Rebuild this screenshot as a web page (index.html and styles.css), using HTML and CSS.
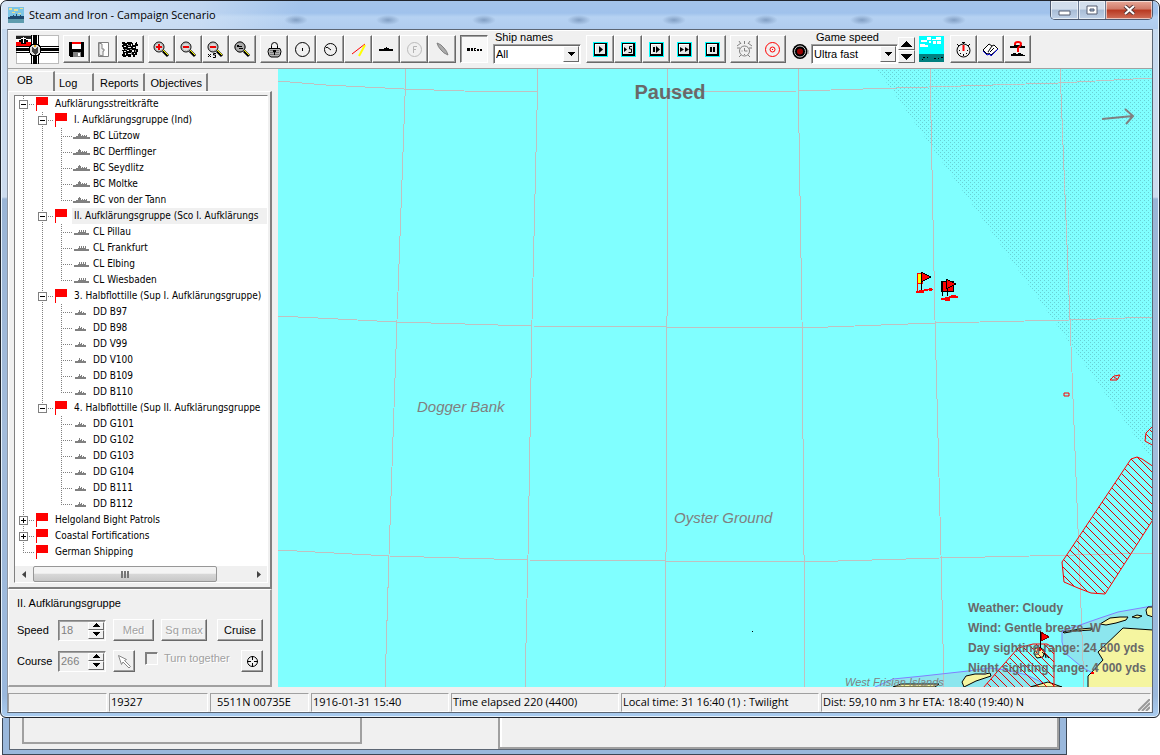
FILE: index.html
```html
<!DOCTYPE html>
<html lang="en">
<head>
    <meta charset="UTF-8">
    <meta name="viewport" content="width=device-width, initial-scale=1.0">
    <title>Steam and Iron - Campaign Scenario</title>
    <link rel="stylesheet" href="styles.css">
</head>
<body>
    <!-- shared icons -->
    <svg class="symbols" aria-hidden="true">
        <symbol id="flag" viewBox="0 0 19 16"><path fill="#f00" d="M2 1h12v8H3v6H2z"/></symbol>
        <symbol id="bc" viewBox="0 0 19 16"><path fill="#808080" d="M1 11V9h3V8h2V6h1V5h1v1h1v2h1V7h1v1h1V7h1v1h1V7h1v2h3v2z"/></symbol>
        <symbol id="cl" viewBox="0 0 19 16"><path fill="#808080" d="M2 11V9h4V8h1V6h1v2h1V6h1v2h1V6h1v2h1V6h1v3h3v2z"/></symbol>
        <symbol id="dd" viewBox="0 0 19 16"><path fill="#808080" d="M3 11V9h3V8h1V6h1v2h1V7h1v2h1V8h1v1h2v2z"/></symbol>
        <symbol id="lens" viewBox="0 0 17 17">
            <path d="M10 10l5 5" stroke="#000" stroke-width="3"/><path d="M10 9l5 5" stroke="#ff0" stroke-width="1"/>
            <circle cx="6" cy="6" r="5" fill="#d8d8d8" stroke="#000" stroke-width="1"/>
            <circle cx="6" cy="6" r="4" fill="none" stroke="#888" stroke-dasharray="1 1"/>
        </symbol>
        <symbol id="play-frame" viewBox="0 0 15 15">
            <path fill="#0ff" d="M0 0h15v15H0z"/><path d="M1 1h13v13H1z" fill="#000"/><path d="M2 2h10v10H2z" fill="#fff"/><path d="M3 3h9v9H3z" fill="#e8e8e8"/>
        </symbol>
        <symbol id="up" viewBox="0 0 9 5"><path d="M4 0h1v1h1v1h1v1h1v1H1V3h1V2h1V1h1z"/></symbol>
        <symbol id="down" viewBox="0 0 9 5"><path d="M1 0h7v1H7v1H6v1H5v1H4V3H3V2H2V1H1z"/></symbol>
        <symbol id="big-up" viewBox="0 0 11 6"><path d="M5 0h1v1h1v1h1v1h1v1h1v1h1v1H0V5h1V4h1V3h1V2h1V1h1z"/></symbol>
        <symbol id="big-down" viewBox="0 0 11 6"><path d="M0 0h11v1h-1v1H9v1H8v1H7v1H6v1H5V5H4V4H3V3H2V2H1V1H0z"/></symbol>
    </svg>

    <div class="window">
        <header class="titlebar">
            <svg class="app-icon" width="16" height="16" viewBox="0 0 16 16"><path fill="#7cc4e4" d="M0 0h16v11H0z"/><path fill="#e8e090" d="M1 1h3v2H1zM6 2h4v2H6zM12 1h3v1h-3zM4 5h3v1H4zM10 6h3v1h-3z"/><path fill="#1d4a70" d="M0 10h2V9h3V8h1v1h2V7h1v2h3V8h1v1h3v3H0z"/><path fill="#5e9cae" d="M0 12h16v4H0z"/></svg>
            <h1>Steam and Iron - Campaign Scenario</h1>
            <div class="caption">
                <button class="min" aria-label="Minimize"><svg width="13" height="6" viewBox="0 0 13 6"><path d="M1 1h11v4H1z" fill="#fff" stroke="#555c70"/></svg></button>
                <button class="max" aria-label="Maximize"><svg width="12" height="10" viewBox="0 0 12 10"><path d="M1 1h10v8H1z" fill="#fff" stroke="#555c70"/><path d="M4 4h4v2H4z" fill="#9db4d0" stroke="#555c70"/></svg></button>
                <button class="close" aria-label="Close"><svg width="13" height="10" viewBox="0 0 13 10"><path d="M2 1l9 8M11 1L2 9" stroke="#5a3a3a" stroke-width="4"/><path d="M2 1l9 8M11 1L2 9" stroke="#fff" stroke-width="2"/></svg></button>
            </div>
        </header>

        <div class="client">
            <div class="toolbar">
                <svg class="ensign" width="43" height="29" viewBox="0 0 43 29" shape-rendering="crispEdges">
                    <path fill="#fff" stroke="#bbb" d="M0.500 0.500h42v28h-42z"/>
                    <path fill="#fff" d="M0 1h15v6H0z"/><path d="M0 1h15v3H0z" fill="#222"/><path fill="#f00" d="M0 7h15v4H0z"/>
                    <path d="M5 4h5v5H5zM3 5h9v2H3z"/><path fill="#fff" d="M7 2h1v6H7zM5 3h5v1H5z"/>
                    <path d="M0 11h43v1H0zM0 13h43v3H0zM0 17h43v1H0z"/><path d="M15 0h1v29h-1zM17 0h4v29h-4zM22 0h1v29h-1z"/>
                    <circle cx="19" cy="15" r="6" fill="#ddd" stroke="#000"/><path d="M16 12l3 2 3-2v5l-3 3-3-3z" fill="#444"/><path fill="#da2" d="M18 10h2v2h-2z"/>
                </svg>
                <div class="group narrow">
                    <button aria-label="Save"><svg width="17" height="17" viewBox="0 0 17 17" shape-rendering="crispEdges"><path d="M1 1h15v15H2l-1-1z"/><path fill="#fff" d="M4 1h9v7H4z"/><path fill="#f00" d="M4 1h9v2H4z"/><path fill="#808080" d="M5 11h8v5H5z"/><path d="M10 12h2v3h-2z" fill="#fff"/></svg></button>
                    <button aria-label="Exit"><svg width="17" height="17" viewBox="0 0 17 17" fill="#fff" stroke="#808080"><path d="M3.500 1.500h10v14h-10z"/><path d="M4 2l3 1v5h2v2H8v5l-4-1z" fill="#efefef"/></svg></button>
                    <button aria-label="Ships"><svg width="17" height="17" viewBox="0 0 17 17" shape-rendering="crispEdges"><path d="M0 1h3v1h2V1h5v1h1v2h2V2h1V1h1v2h1v2h-2v3h2v3h-1v3h-2v2h-2v-2h-2v1H9v1H6v-1H4v1H1v-1H0v-2h1v-3H0V9h2V8H1V6H0V4h1V3H0z"/><path fill="#efefef" d="M5 3h1v1H5zM9 3h1v2H9zM6 6h3v1H6zM11 6h2v1h-2zM2 10h2v1H2zM5 9h2v1H5zM6 12h3v1H6zM10 9h2v2h-2zM2 5h2v1H2zM12 12h1v1h-1zM3 12h1v2H3z"/><path fill="#888" d="M6 4h2v1H6zM8 8h2v1H8zM13 9h1v2h-1zM3 8h2v1H3zM9 11h1v3H9z"/></svg></button>
                </div>
                <div class="group narrow">
                    <button aria-label="Zoom in"><svg width="17" height="17"><use href="#lens" width="17" height="17"/><path d="M3 5h6v2H3zM5 3h2v6H5z" fill="#e00"/></svg></button>
                    <button aria-label="Zoom out"><svg width="17" height="17"><use href="#lens" width="17" height="17"/><path d="M3 5h6v2H3z" fill="#e00"/></svg></button>
                    <button aria-label="Zoom out five times"><svg width="17" height="17"><use href="#lens" width="17" height="17"/><path d="M3 5h6v2H3z" fill="#e00"/><path d="M0 12h9v5H0z" fill="#efefef"/><path d="M1 13l3 3M4 13l-3 3M9 12.500H6.500V14H8.500v2.500H6" fill="none" stroke="#000"/></svg></button>
                    <button aria-label="Zoom to fit"><svg width="17" height="17"><use href="#lens" width="17" height="17"/><circle cx="6" cy="6" r="5" fill="#aaa" stroke="#222"/><path d="M3 4h2v1h3v1H3zM5 7h4v1H5z"/></svg></button>
                </div>
                <div class="group">
                    <button aria-label="Lock"><svg width="17" height="17" viewBox="0 0 17 17"><path d="M5.500 8V4.500q0-3 3-3t3 3V8" fill="none" stroke="#000"/><path d="M3 7.500h11l1 3-1 4-2 1.500H5l-2-1.500-1-4z" fill="#b4b4b4" stroke="#000"/><path d="M4 9.500h9M4 11.500h9M4 13.500h9" stroke="#777"/><path d="M7 9h3v2H9v3H8v-3H7z"/></svg></button>
                    <button aria-label="Range circle"><svg width="17" height="17" viewBox="0 0 17 17"><circle cx="8.500" cy="8.500" r="7" fill="none" stroke="#000"/><path d="M8 7h1v3H8z"/></svg></button>
                    <button aria-label="Bearing circle"><svg width="17" height="17" viewBox="0 0 17 17"><circle cx="8.500" cy="8.500" r="6" fill="none" stroke="#000"/><path d="M9 9L5 6M4 7l1-1" stroke="#000"/></svg></button>
                    <button aria-label="Torpedo lines"><svg width="17" height="17" viewBox="0 0 17 17"><path d="M2 13L15 3" stroke="#f00"/><path d="M15 4L9 15" stroke="#ff0" stroke-width="2"/></svg></button>
                    <button aria-label="Ship size"><svg width="17" height="17" viewBox="0 0 17 17" shape-rendering="crispEdges"><path d="M1 8h5V7h2V6h1v1h2v1h4v2H1z"/></svg></button>
                    <button disabled aria-label="Formation"><svg width="17" height="17" viewBox="0 0 17 17"><circle cx="8.500" cy="8.500" r="7" fill="none" stroke="#bbb"/><path d="M7.500 12V5.500H11M7.500 8.500H10" fill="none" stroke="#b4b4b4"/></svg></button>
                    <button disabled aria-label="Airship"><svg width="17" height="17" viewBox="0 0 17 17"><path d="M3 2q4 1 7 5 3 3 4 7-5-2-7-5-3-3-4-7z" fill="#aaa" stroke="#808080"/></svg></button>
                </div>
                <button class="pressed" aria-label="Show track"><svg width="17" height="5" viewBox="0 0 17 5" shape-rendering="crispEdges"><path d="M1 1h3v3H1zM5 1h2v3H5zM8 1h1v3H8zM9 1h1v1H9zM9 3h1v1H9zM11 2h2v2h-2zM14 2h2v2h-2z"/></svg></button>
                <div class="field ship-names">
                    <label for="shipNames">Ship names</label>
                    <span class="combo">
                        <select id="shipNames"><option>All</option></select>
                        <span class="arrow"><svg width="9" height="5"><use href="#down"/></svg></span>
                    </span>
                </div>
                <div class="group">
                    <button aria-label="Run"><svg width="15" height="15"><use href="#play-frame"/><path d="M6 4l4 3.500L6 11z"/></svg></button>
                    <button aria-label="Run five turns"><svg width="15" height="15"><use href="#play-frame"/><path d="M3 5l3 2.500L3 10z"/><path d="M11 4.500H8.500V7h2v3.500H7.500" fill="none" stroke="#000"/></svg></button>
                    <button aria-label="Step"><svg width="15" height="15"><use href="#play-frame"/><path d="M4 5h2v5H4zM7 4l4 3.500L7 11z"/></svg></button>
                    <button aria-label="Fast forward"><svg width="15" height="15"><use href="#play-frame"/><path d="M3 5l4 2.500L3 10zM8 5l4 2.500L8 10z"/></svg></button>
                    <button aria-label="Pause"><svg width="15" height="15"><use href="#play-frame"/><path d="M5 5h2v5H5zM8 5h2v5H8z"/></svg></button>
                </div>
                <div class="group">
                    <button disabled aria-label="Alarm"><svg width="17" height="17" viewBox="0 0 17 17" fill="none" stroke="#808080"><circle cx="8.500" cy="10" r="5"/><path d="M1 5l4-3M12 2l4 3M8.500 0v3M3 0l2 3M14 0l-2 3M5 14l-2 2M12 14l2 2M8.500 7v3h3M1 7h3M13 7h3M5.500 10h1M8.500 13v1"/></svg></button>
                    <button aria-label="Target"><svg width="17" height="17" viewBox="0 0 17 17" fill="none" stroke="#f00"><circle cx="8.500" cy="8.500" r="7"/><circle cx="8.500" cy="8.500" r="2.500"/><path d="M8 8.500h1"/></svg></button>
                </div>
                <div class="speed">
                    <svg class="led" width="17" height="17" viewBox="0 0 17 17"><circle cx="8" cy="8.500" r="7.500"/><circle cx="8" cy="8.500" r="5.500" fill="none" stroke="#ccc"/><circle cx="8" cy="8.500" r="3" fill="#900"/><path d="M16 7v4" stroke="#888"/></svg>
                    <div class="field game-speed">
                        <label for="gameSpeed">Game speed</label>
                        <span class="combo">
                            <select id="gameSpeed"><option>Ultra fast</option></select>
                            <span class="arrow"><svg width="9" height="5"><use href="#down"/></svg></span>
                        </span>
                    </div>
                    <span class="spin">
                        <button aria-label="Faster"><svg width="11" height="6"><use href="#big-up"/></svg></button>
                        <button aria-label="Slower"><svg width="11" height="6"><use href="#big-down"/></svg></button>
                    </span>
                </div>
                <svg class="sea" width="25" height="26" viewBox="0 0 25 26" shape-rendering="crispEdges"><path fill="#0ff" d="M0 0h25v18H0z"/><path fill="#008080" d="M0 18h25v8H0z"/><path fill="#fff" d="M8 1h4v3H8zM17 1h5v3h-5zM13 3h4v1h-4zM2 4h6v2H2zM14 5h3v3h-3zM18 5h4v3h-4zM1 8h5v3H1zM5 9h4v2H5zM10 5h2v2h-2z"/><path d="M4 21h2v1H4zM3 23h1v1H3zM8 21h1v1H8zM15 22h2v1h-2zM19 22h1v1h-1zM22 21h2v1h-2z"/></svg>
                <div class="group narrow">
                    <button aria-label="Time"><svg width="17" height="17" viewBox="0 0 17 17" fill="none" stroke="#000"><circle cx="8.500" cy="9.500" r="6.500"/><path d="M7 1.500h3M8.500 1v2M2 3l2 2M15 3l-2 2M4 9.500h1M12 9.500h1M8.500 13v2M5 13l1-1M12 13l-1-1"/><path d="M8.500 4v6" stroke="#f00" stroke-width="2"/></svg></button>
                    <button aria-label="Log book"><svg width="17" height="17" viewBox="0 0 17 17" fill="#fff" stroke="#000"><path d="M1 9l6-6 3 2 2-1 4 4-7 6-2-2-2 1z"/><path d="M1 10l4 4 3-1 1 2 7-7" fill="none" stroke="#00c"/><path d="M10 5l-4 6M12 7l-4 4"/></svg></button>
                    <button aria-label="Help"><svg width="17" height="17" viewBox="0 0 17 17"><path d="M1 5h4V4h8v1h3v2H1zM2 15v-2h2v-1h3v1h2v-1h3v1h2v1h2v1z"/><path d="M6 4V3q0-2 3-2t3 2q0 2-3 4v4" fill="none" stroke="#f00" stroke-width="2"/></svg></button>
                </div>
            </div>

            <div class="main">
                <aside class="side">
                    <div class="tabs">
                        <button class="active">OB</button><button>Log</button><button>Reports</button><button>Objectives</button>
                    </div>
                    <div class="page">
                        <div class="tree-box">
                            <ul class="tree">
                                <li>
                                    <div class="row"><button class="minus" aria-label="Collapse"></button><svg><use href="#flag"/></svg><span>Aufklärungsstreitkräfte</span></div>
                                    <ul>
                                        <li>
                                            <div class="row"><button class="minus" aria-label="Collapse"></button><svg><use href="#flag"/></svg><span>I. Aufklärungsgruppe (Ind)</span></div>
                                            <ul>
                                                <li><div class="row"><svg><use href="#bc"/></svg><span>BC Lützow</span></div></li>
                                                <li><div class="row"><svg><use href="#bc"/></svg><span>BC Derfflinger</span></div></li>
                                                <li><div class="row"><svg><use href="#bc"/></svg><span>BC Seydlitz</span></div></li>
                                                <li><div class="row"><svg><use href="#bc"/></svg><span>BC Moltke</span></div></li>
                                                <li><div class="row"><svg><use href="#bc"/></svg><span>BC von der Tann</span></div></li>
                                            </ul>
                                        </li>
                                        <li>
                                            <div class="row selected"><button class="minus" aria-label="Collapse"></button><svg><use href="#flag"/></svg><span>II. Aufklärungsgruppe (Sco I. Aufklärungs</span></div>
                                            <ul>
                                                <li><div class="row"><svg><use href="#cl"/></svg><span>CL Pillau</span></div></li>
                                                <li><div class="row"><svg><use href="#cl"/></svg><span>CL Frankfurt</span></div></li>
                                                <li><div class="row"><svg><use href="#cl"/></svg><span>CL Elbing</span></div></li>
                                                <li><div class="row"><svg><use href="#cl"/></svg><span>CL Wiesbaden</span></div></li>
                                            </ul>
                                        </li>
                                        <li>
                                            <div class="row"><button class="minus" aria-label="Collapse"></button><svg><use href="#flag"/></svg><span>3. Halbflottille (Sup I. Aufklärungsgruppe)</span></div>
                                            <ul>
                                                <li><div class="row"><svg><use href="#dd"/></svg><span>DD B97</span></div></li>
                                                <li><div class="row"><svg><use href="#dd"/></svg><span>DD B98</span></div></li>
                                                <li><div class="row"><svg><use href="#dd"/></svg><span>DD V99</span></div></li>
                                                <li><div class="row"><svg><use href="#dd"/></svg><span>DD V100</span></div></li>
                                                <li><div class="row"><svg><use href="#dd"/></svg><span>DD B109</span></div></li>
                                                <li><div class="row"><svg><use href="#dd"/></svg><span>DD B110</span></div></li>
                                            </ul>
                                        </li>
                                        <li>
                                            <div class="row"><button class="minus" aria-label="Collapse"></button><svg><use href="#flag"/></svg><span>4. Halbflottille (Sup II. Aufklärungsgruppe</span></div>
                                            <ul>
                                                <li><div class="row"><svg><use href="#dd"/></svg><span>DD G101</span></div></li>
                                                <li><div class="row"><svg><use href="#dd"/></svg><span>DD G102</span></div></li>
                                                <li><div class="row"><svg><use href="#dd"/></svg><span>DD G103</span></div></li>
                                                <li><div class="row"><svg><use href="#dd"/></svg><span>DD G104</span></div></li>
                                                <li><div class="row"><svg><use href="#dd"/></svg><span>DD B111</span></div></li>
                                                <li><div class="row"><svg><use href="#dd"/></svg><span>DD B112</span></div></li>
                                            </ul>
                                        </li>
                                    </ul>
                                </li>
                                <li><div class="row"><button class="minus plus" aria-label="Expand"></button><svg><use href="#flag"/></svg><span>Helgoland Bight Patrols</span></div></li>
                                <li><div class="row"><button class="minus plus" aria-label="Expand"></button><svg><use href="#flag"/></svg><span>Coastal Fortifications</span></div></li>
                                <li><div class="row"><svg><use href="#flag"/></svg><span>German Shipping</span></div></li>
                            </ul>
                            <div class="scrollbar">
                                <button aria-label="Scroll left"><svg width="5" height="7" viewBox="0 0 5 7"><path d="M4 0v7L0 3.500z" fill="#444"/></svg></button>
                                <div class="thumb"><svg width="8" height="7" viewBox="0 0 8 7" shape-rendering="crispEdges"><path d="M0 0h2v7H0zM3 0h2v7H3zM6 0h2v7H6z" fill="#777"/></svg></div>
                                <button aria-label="Scroll right"><svg width="5" height="7" viewBox="0 0 5 7"><path d="M1 0v7l4-3.500z" fill="#444"/></svg></button>
                            </div>
                        </div>
                    </div>

                    <form class="orders">
                        <h2>II. Aufklärungsgruppe</h2>
                        <div class="line">
                            <label for="speed">Speed</label>
                            <span class="number">
                                <input type="text" id="speed" value="18" disabled>
                                <span class="spin">
                                    <button type="button" aria-label="Increase speed"><svg width="9" height="5"><use href="#up"/></svg></button>
                                    <button type="button" aria-label="Decrease speed"><svg width="9" height="5"><use href="#down"/></svg></button>
                                </span>
                            </span>
                            <button type="button" class="btn med" disabled>Med</button>
                            <button type="button" class="btn sq" disabled>Sq max</button>
                            <button type="button" class="btn last">Cruise</button>
                        </div>
                        <div class="line">
                            <label for="course">Course</label>
                            <span class="number">
                                <input type="text" id="course" value="266" disabled>
                                <span class="spin">
                                    <button type="button" aria-label="Increase course"><svg width="9" height="5"><use href="#up"/></svg></button>
                                    <button type="button" aria-label="Decrease course"><svg width="9" height="5"><use href="#down"/></svg></button>
                                </span>
                            </span>
                            <button type="button" class="btn square" disabled aria-label="Pick course"><svg width="15" height="15" viewBox="0 0 15 15"><path d="M1.500 1.500l8 4-2 1 6 6-1.500 1.500-6-6-1.500 2.500z" fill="#fff" stroke="#888"/></svg></button>
                            <span class="check"><input type="checkbox" id="turn" disabled><label for="turn">Turn together</label></span>
                            <button type="button" class="btn square last" aria-label="Centre"><svg width="13" height="13" viewBox="0 0 13 13" fill="none" stroke="#000"><circle cx="6.500" cy="6.500" r="5"/><path d="M6.500 1v4M6.500 8v4M1 6.500h4M8 6.500h4"/></svg></button>
                        </div>
                    </form>
                </aside>

                <div class="map">
                    <svg class="chart" viewBox="278 69 874 618" preserveAspectRatio="xMidYMid slice">
                        <defs>
                            <pattern id="night" width="4" height="4" patternUnits="userSpaceOnUse"><path fill="#68d0d4" d="M0 0h1v1H0zM2 2h1v1H2z"/></pattern>
                            <pattern id="mines" width="8" height="8" patternUnits="userSpaceOnUse"><path d="M0 0h1v1h1v1h1v1h1v1h1v1h1v1h1v1h1v1H7V7H6V6H5V5H4V4H3V3H2V2H1V1H0z" fill="#e00000" shape-rendering="crispEdges"/></pattern>
                        </defs>
                        <!-- shallow water -->
                        <g fill="#8ce6ee">
                            <path d="M1152 606l-34 6-18 6-20 7-18 6v11l3 11 18 15 8 4 61-20z"/>
                            <path d="M875 687l18-8 30-3 45-5 22-3 17 2 20 5 20 10 2 2z"/>
                        </g>
                        <path d="M877 69h275v391z" fill="url(#night)"/>
                        <!-- latitude and longitude -->
                        <g fill="none" stroke="#c0c0c0" shape-rendering="crispEdges">
                            <path d="M406 69l-9 251-8 235-4 132M538 69l-6 251-4 235-3 132M668 69l-1 251-1 235-1 132M798 69l4 251 2 235 1 132M930 69l5 251 6 235 3 132M1060 69l10 251 9 235 5 132"/>
                            <path d="M278 81l48 4 78 4 60 2 73 1h131l130-1 131-4 129-4 94-5M278 316l119 6 135 4 135 1 134 1 134-5 135-3 82-3M278 550l111 6 139 4 137 1 139 1 136-4 135-3 77-2"/>
                        </g>
                        <path d="M752 631h1v1h-1z"/>
                        <g fill="none" stroke="#8080ff">
                            <path d="M1152 606l-34 6-18 6-20 7-18 6v11l3 11 18 15 8 4"/>
                            <path d="M875 687l18-8 30-3 45-5 22-3 17 2 20 5 20 10 2 2"/>
                        </g>
                        <!-- land -->
                        <g fill="#f5f5a0" stroke="#000">
                            <path d="M1153 630l-30-2-25 24 5 8-12 13-3 3v12h65z"/>
                            <path d="M964 687l-2-5 4-6 9-2h10l5-1 1 3-15 5z"/>
                            <path d="M893 687l8-3h38l-4 3zM1030 687l18-5 14 5z"/>
                            <path d="M1100 624l10-6 10-1h8l-2 3-10 3-10 2zM1132 617l5-2 5 1-4 2zM1153 607h-5l-2 3 1 5 6 2z"/>
                            <path d="M1063 632l17-3 12-1-1 2-16 1-11 2z"/>
                            <path d="M1035 648h6l4 3-2 6-6 1-3-4z"/>
                        </g>
                        <path d="M1042 652l7 6M1044 650l2 8" stroke="#000"/>
                        <!-- minefields -->
                        <g fill="url(#mines)" stroke="#f00" stroke-width="1">
                            <path d="M1062 562l69-103 6-2 5 2 12 8v51l-49 76-14-1-13-5-14-6z"/>
                            <path d="M1154 425l-8 8-1 8 9 5z"/>
                            <path d="M983 688l35-40 15-4h14l7 4v40z"/>
                        </g>
                        <path d="M1110 380l4-4 6-1-3 5h-7zM1064 393h5v3h-5zM1114 377l3 2" fill="none" stroke="#f00"/>
                        <path d="M1091 673h3" stroke="#f00" stroke-width="2"/>
                        <!-- ships -->
                        <g shape-rendering="crispEdges">
                            <path d="M917 273h5v10h-5z" fill="#ff0" stroke="#f00"/><path d="M917 274v18" stroke="#f00"/><path d="M921 272v18" stroke="#000"/>
                            <path d="M921 272l10 5-10 5z" fill="#f00" stroke="#000"/>
                            <path d="M916 292h3M924 290h4" stroke="#f00" stroke-width="2"/><path d="M919 290h5v3h-5zM929 288h3v3h-3z" fill="#f00"/><path d="M927 289h6" stroke="#f00"/>
                            <path d="M941 281h12v10h-12z" fill="#f00" stroke="#000"/><path d="M942 281v15M947 279v17" stroke="#000"/>
                            <path d="M946 279l10 5-10 5z" fill="#f00" stroke="#000"/>
                            <path d="M941 299h4M949 297h9" stroke="#f00" stroke-width="2"/><path d="M945 297h5v4h-5zM951 295h5v3h-5z" fill="#f00"/>
                            <path d="M1040 631v18" stroke="#000"/><path d="M1041 632l8 5-8 4z" fill="#f00" stroke="#800000"/><path d="M1037 648h4v3h-4z" fill="#f00"/>
                        </g>
                        <path d="M1102 119l31-3M1125 109l8 7-7 8" fill="none" stroke="#808080" stroke-width="2"/>
                        <text x="417" y="412" class="area">Dogger Bank</text>
                        <text x="674" y="523" class="area">Oyster Ground</text>
                        <text x="845" y="686" class="area small">West Frisian Islands</text>
                    </svg>
                    <p class="paused">Paused</p>
                    <div class="weather">
                        <p>Weather: Cloudy</p>
                        <p>Wind: Gentle breeze&nbsp; W</p>
                        <p>Day sighting range: 24 500 yds</p>
                        <p>Night sighting range: 4 000 yds</p>
                    </div>
                </div>
            </div>

            <footer class="status">
                <span></span>
                <span>19327</span>
                <span class="position">5511N 00735E</span>
                <span>1916-01-31 15:40</span>
                <span>Time elapsed 220 (4400)</span>
                <span>Local time: 31 16:40 (1) : Twilight</span>
                <span class="dist">Dist: 59,10 nm 3 hr ETA: 18:40 (19:40) N
                    <svg width="12" height="12" viewBox="0 0 12 12"><path d="M0 12L12 0M4 12l8-8M8 12l4-4" stroke="#999" stroke-width="2"/></svg>
                </span>
            </footer>
        </div>
    </div>

    <!-- window behind -->
    <div class="back-window">
        <div class="back-client">
            <div class="back-left"><div class="back-box"></div></div>
            <div class="back-right"></div>
        </div>
    </div>
</body>
</html>
```
FILE: styles.css
```css
* {
    box-sizing: border-box;
}

body {
    margin: 0;
    min-height: 100vh;
    display: flex;
    flex-direction: column;
    background-color: #fff;
    font-family: "Liberation Sans", Arial, sans-serif;
    font-size: 11px;
    line-height: 14px;
    color: #000;
}

button, input, select {
    font: inherit;
    color: inherit;
    margin: 0;
    padding: 0;
    border-radius: 0;
}

h1, h2, p, ul {
    margin: 0;
    padding: 0;
}

h1, h2 {
    font-weight: normal;
}

svg {
    display: block;
    flex: none;
}

.symbols {
    position: absolute;
    width: 0;
    height: 0;
}

/* window frame */
.window {
    flex: 1;
    display: flex;
    flex-direction: column;
    padding: 0 6px 4px;
    border: 1px solid #20242c;
    border-radius: 7px 7px 6px 6px;
    background: linear-gradient(#c4d8ee 0, #cddcee 196px, #9ab5d6 198px, #a3bcdb 60%, #9ab8dc 97%, #a9ccf0 100%);
    box-shadow: inset 0 0 0 1px #e6f2fc;
}

.titlebar {
    height: 28px;
    display: flex;
    align-items: flex-start;
    margin: 0 -5px;
    padding: 0 5px 0 6px;
    border-radius: 6px 6px 0 0;
    background:
        radial-gradient(ellipse at center, rgba(80, 110, 150, 0.5), transparent 70%) 282px 14px / 24px 10px no-repeat,
        radial-gradient(ellipse at center, rgba(80, 110, 150, 0.5), transparent 70%) 374px 14px / 24px 10px no-repeat,
        radial-gradient(ellipse at center, rgba(80, 110, 150, 0.5), transparent 70%) 470px 14px / 24px 10px no-repeat,
        radial-gradient(ellipse at center, rgba(80, 110, 150, 0.5), transparent 70%) 565px 14px / 24px 10px no-repeat,
        radial-gradient(ellipse at center, rgba(80, 110, 150, 0.5), transparent 70%) 660px 14px / 24px 10px no-repeat,
        radial-gradient(ellipse at center, rgba(80, 110, 150, 0.5), transparent 70%) 752px 14px / 24px 10px no-repeat,
        radial-gradient(ellipse at center, rgba(80, 110, 150, 0.5), transparent 70%) 848px 14px / 24px 10px no-repeat,
        radial-gradient(ellipse at center, rgba(80, 110, 150, 0.5), transparent 70%) 940px 14px / 24px 10px no-repeat,
        linear-gradient(90deg, rgba(220, 232, 246, 0.9), rgba(220, 232, 246, 0.5) 200px, transparent 300px),
        linear-gradient(#a4c4ea, #a0c2ec 12px, #b6d2f2 16px, #b0ccee 28px);
}

.app-icon {
    margin-top: 6px;
}

.titlebar h1 {
    flex: 1;
    padding: 6px 0 0 5px;
    font-family: "Open Sans", sans-serif;
    font-size: 11px;
    line-height: 16px;
}

.caption {
    display: flex;
    height: 19px;
    border: 1px solid #4d5a70;
    border-top: 0;
    border-radius: 0 0 5px 5px;
    overflow: hidden;
}

.caption button {
    display: flex;
    align-items: center;
    justify-content: center;
    border: 0;
    border-right: 1px solid #6c7a92;
    background: linear-gradient(#d2deec 45%, #a8bcd6 50%, #c0d2e8);
    box-shadow: inset 0 0 0 1px rgba(255, 255, 255, 0.6);
}

.caption .min {
    width: 28px;
    padding-top: 6px;
}

.caption .max {
    width: 27px;
}

.caption .close {
    width: 46px;
    border-right: 0;
    background: linear-gradient(#e8a898, #d07a68 45%, #b83820 50%, #d0705a);
}

.client {
    flex: 1;
    display: flex;
    flex-direction: column;
    border: 1px solid #5c6674;
    border-left-color: #8c94a0;
    background-color: #f0f0f0;
    box-shadow: inset 0 1px 0 #fff;
}

/* toolbar */
.toolbar {
    display: flex;
    align-items: flex-start;
    gap: 4px;
    height: 39px;
    padding: 5px 8px 0;
    border-bottom: 1px solid #a0a0a0;
}

.group {
    display: flex;
}

.toolbar .group button,
.pressed {
    display: flex;
    align-items: center;
    justify-content: center;
    width: 28px;
    height: 28px;
    border: 1px solid;
    border-color: #fff #696969 #696969 #fff;
    background-color: #f0f0f0;
    box-shadow: inset -1px -1px 0 #a0a0a0;
}

.toolbar .narrow button {
    width: 27px;
}

.toolbar .pressed {
    border-color: #696969 #fff #fff #696969;
    background-color: #f8f8f8;
    box-shadow: inset 1px 1px 0 #a0a0a0;
}

.field {
    display: flex;
    flex-direction: column;
    margin-top: -4px;
}

.field label {
    height: 13px;
    line-height: 12px;
    padding-left: 2px;
}

.ship-names {
    width: 88px;
    margin-left: 1px;
    margin-right: 1px;
}

.game-speed {
    width: 87px;
}

.game-speed label {
    padding-left: 5px;
}

.combo {
    display: grid;
    height: 20px;
    border: 1px solid;
    border-color: #a0a0a0 #fff #fff #a0a0a0;
    background-color: #fff;
    box-shadow: inset 1px 1px 0 #696969;
}

.combo select {
    grid-area: 1 / 1;
    appearance: none;
    width: 100%;
    padding-left: 2px;
    border: 0;
    background: none;
}

.arrow {
    grid-area: 1 / 1;
    justify-self: end;
    display: flex;
    align-items: center;
    justify-content: center;
    width: 16px;
    margin: 1px;
    border: 1px solid;
    border-color: #fff #696969 #696969 #fff;
    background-color: #f0f0f0;
    pointer-events: none;
}

.speed {
    display: flex;
}

.led {
    width: 17px;
    margin: 8px 2px 0;
}

.spin {
    display: flex;
    flex-direction: column;
}

.spin button {
    flex: 1;
    display: flex;
    align-items: center;
    justify-content: center;
    border: 1px solid;
    border-color: #fff #696969 #696969 #fff;
    background-color: #f0f0f0;
}

.toolbar .spin {
    width: 17px;
    height: 26px;
    margin-top: 2px;
}

.sea {
    margin-top: 1px;
    margin-right: 2px;
}

/* left side */
.main {
    flex: 1;
    display: flex;
}

.side {
    display: flex;
    flex-direction: column;
    width: 264px;
    margin-right: 6px;
    padding-top: 2px;
}

.tabs {
    display: flex;
    align-items: flex-end;
    height: 20px;
}

.tabs button {
    height: 18px;
    padding: 0 4px 0 6px;
    border: 0;
    border-right: 2px solid #808080;
    border-top: 1px solid #fff;
    background: none;
}

.tabs .active {
    width: 47px;
    height: 20px;
    padding: 0 0 4px 9px;
    text-align: left;
}

.tabs .active + button {
    width: 39px;
    padding: 0 0 0 4px;
    text-align: left;
}

.page {
    flex: 1;
    display: flex;
    padding: 3px 2px 4px 5px;
    border: 1px solid;
    border-color: #fff #808080 #808080 #fff;
    border-right-width: 2px;
    border-bottom-width: 2px;
}

.tree-box {
    flex: 1;
    display: flex;
    flex-direction: column;
    min-width: 0;
    border: 1px solid;
    border-color: #808080 #fff #fff #808080;
    background-color: #fff;
    overflow: hidden;
}

.tree {
    flex: 1;
    overflow: hidden;
    font-family: "DejaVu Sans Condensed", "Liberation Sans", sans-serif;
    font-size: 10px;
}

.tree,
.tree ul {
    list-style: none;
}

.tree ul {
    margin-left: 19px;
}

.tree li {
    background: repeating-linear-gradient(#808080 0 1px, transparent 1px 2px) 8px 0 / 1px 100% no-repeat;
}

.tree li:last-child {
    background-size: 1px 8px;
}

.row {
    display: flex;
    align-items: center;
    height: 16px;
    padding-left: 19px;
    white-space: nowrap;
    background: repeating-linear-gradient(90deg, #808080 0 1px, transparent 1px 2px) 8px 8px / 12px 1px no-repeat;
}

.row svg {
    width: 19px;
    height: 16px;
}

.row span {
    height: 16px;
    line-height: 16px;
    padding-left: 2px;
}

.row.selected span {
    flex: 1;
    background-color: #f0f0f0;
}

.row button {
    flex: none;
    width: 9px;
    height: 9px;
    margin-left: -15px;
    margin-right: 6px;
    border: 1px solid #808080;
    background: linear-gradient(#000, #000) 1px 3px / 5px 1px no-repeat #fff;
}

.row .plus {
    background: linear-gradient(#000, #000) 1px 3px / 5px 1px no-repeat, linear-gradient(#000, #000) 3px 1px / 1px 5px no-repeat #fff;
}

.scrollbar {
    display: flex;
    height: 16px;
    background-color: #f0f0f0;
}

.scrollbar button {
    display: flex;
    align-items: center;
    justify-content: center;
    width: 18px;
    border: 0;
    background: none;
}

.scrollbar button:last-child {
    margin-left: auto;
}

.thumb {
    display: flex;
    align-items: center;
    justify-content: center;
    width: 73%;
    border: 1px solid #979797;
    border-radius: 2px;
    background: linear-gradient(#f4f4f4 45%, #d8d8d8 50%, #c8c8c8);
}

/* orders panel */
.orders {
    height: 98px;
    padding: 6px 7px 0 8px;
    border: 1px solid;
    border-color: #fff #a0a0a0 #a0a0a0 #fff;
    border-right-width: 2px;
    border-bottom-width: 2px;
}

.orders h2 {
    font-size: 11px;
    line-height: 14px;
    margin-bottom: 9px;
}

.line {
    display: flex;
    align-items: center;
    height: 22px;
    margin-bottom: 9px;
}

.line > label {
    width: 41px;
}

.number {
    display: flex;
    width: 48px;
    height: 21px;
    margin-right: 7px;
    border: 1px solid;
    border-color: #808080 #fff #fff #808080;
    box-shadow: inset 1px 1px 0 #a0a0a0;
}

.number input {
    flex: 1;
    min-width: 0;
    padding-left: 2px;
    border: 0;
    background: none;
    color: #808080;
}

.number .spin {
    width: 16px;
    margin: 1px;
}

.btn {
    height: 22px;
    border: 1px solid;
    border-color: #fff #696969 #696969 #fff;
    background-color: #f0f0f0;
    box-shadow: inset -1px -1px 0 #a0a0a0;
}

.btn:disabled,
.check label {
    color: #a0a0a0;
    text-shadow: 1px 1px 0 #fff;
}

.btn.med {
    width: 41px;
    margin-right: 7px;
}

.btn.sq,
.btn.last {
    width: 46px;
}

.btn.last {
    margin-left: auto;
}

.btn.square {
    display: flex;
    align-items: center;
    justify-content: center;
    width: 22px;
}

.check {
    display: flex;
    align-items: center;
    gap: 6px;
    height: 16px;
    margin-left: 10px;
    align-self: flex-start;
}

.check input {
    appearance: none;
    width: 13px;
    height: 13px;
    border: 1px solid;
    border-color: #808080 #fff #fff #808080;
    box-shadow: inset 1px 1px 0 #808080;
}

/* map */
.map {
    position: relative;
    flex: 1;
    background-color: #80ffff;
    overflow: hidden;
}

.chart {
    position: absolute;
    width: 100%;
    height: 100%;
}

.area {
    font-size: 15px;
    font-style: italic;
    fill: #808080;
}

.area.small {
    font-size: 11px;
}

.paused {
    position: absolute;
    top: 12px;
    left: 0;
    width: 784px;
    text-align: center;
    font-size: 20px;
    line-height: 22px;
    font-weight: bold;
    color: #696969;
}

.weather {
    position: absolute;
    right: 0;
    bottom: 9px;
    width: 184px;
    font-size: 12px;
    line-height: 20px;
    font-weight: bold;
    white-space: nowrap;
    color: #696969;
}

/* status bar */
.status {
    display: flex;
    gap: 2px;
    height: 25px;
    padding: 6px 1px 0 0;
    font-family: "Open Sans", sans-serif;
    font-size: 11px;
    line-height: 16px;
    white-space: nowrap;
}

.status span {
    width: 99px;
    padding-left: 1px;
    border: 1px solid;
    border-color: #a0a0a0 #fff #fff #a0a0a0;
}

.status .position {
    padding-left: 6px;
}

.status span:nth-child(4) {
    width: 138px;
}

.status span:nth-child(5) {
    width: 168px;
}

.status span:nth-child(6) {
    width: 198px;
}

.status .dist {
    flex: 1;
    display: flex;
    justify-content: space-between;
}

.dist svg {
    align-self: flex-end;
}

/* window behind */
.back-window {
    height: 37px;
    margin: 0 93px 0 2px;
    padding: 0 6px 4px;
    border: 1px solid #3c4654;
    border-width: 0 1px 1px;
    background-color: #9ab8dc;
}

.back-client {
    height: 100%;
    display: flex;
    border: 1px solid #5c6674;
    border-top: 0;
    background-color: #f0f0f0;
}

.back-left {
    width: 490px;
    padding: 0 136px 5px 12px;
    border-right: 2px solid #a0a0a0;
}

.back-box {
    height: 100%;
    border: 1px solid #a0a0a0;
    border-width: 0 2px 2px;
}

.back-right {
    flex: 1;
    border: 2px solid #a0a0a0;
    border-width: 0 2px 2px 0;
    box-shadow: inset 2px 0 0 #fff;
}
```
